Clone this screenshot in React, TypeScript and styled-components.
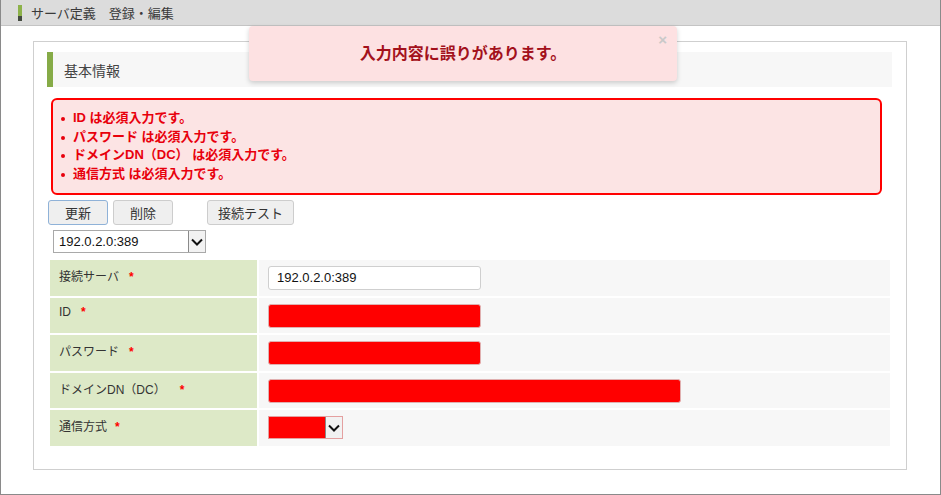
import React from "react";
import styled, { createGlobalStyle } from "styled-components";

const Global = createGlobalStyle`
  html, body { margin: 0; padding: 0; background: #fff; }
  body { font-family: "Liberation Sans", "Noto Sans CJK JP", sans-serif; color: #333; }
  * { box-sizing: border-box; }
`;

const Frame = styled.div`
  position: relative;
  width: 941px;
  height: 495px;
  border: 1px solid #8a8a8a;
  border-top: none;
  overflow: hidden;
`;

const Header = styled.div`
  height: 26px;
  background: #dcdcdc;
  border-bottom: 1px solid #c4c4c4;
  display: flex;
  align-items: center;
  padding-left: 17px;
  gap: 9px;
  font-size: 13px;
  color: #3a3a3a;
`;

const HeaderMark = styled.span`
  display: flex;
  flex-direction: column;
  width: 4px;
  height: 16px;
  margin-top: 1px;
`;

const MarkTop = styled.span`
  flex: 11;
  background: #8db24a;
`;
const MarkBottom = styled.span`
  flex: 5;
  background: #444b40;
`;

const Panel = styled.div`
  margin: 15px 33px 0 32px;
  height: 429px;
  border: 1px solid #cfcfcf;
  padding: 10px 14px 0 13px;
`;

const SectionTitle = styled.div`
  height: 35px;
  background: #f7f7f7;
  border-left: 6px solid #86ab47;
  display: flex;
  align-items: center;
  padding-left: 11px;
  font-size: 14px;
  color: #444;
`;

const ErrorBox = styled.ul`
  margin: 11px 0 0 4px;
  width: 831px;
  height: 97px;
  border: 2px solid #f00;
  border-radius: 6px;
  background: #fce4e4;
  padding: 9px 0 0 8px;
  list-style: none;
`;

const ErrorItem = styled.li`
  position: relative;
  font-size: 13px;
  line-height: 18.5px;
  font-weight: bold;
  color: #e8000c;
  padding-left: 12px;
  &::before {
    content: "";
    position: absolute;
    left: 0;
    top: 8px;
    width: 4px;
    height: 4px;
    border-radius: 50%;
    background: #e8000c;
  }
`;

const ButtonRow = styled.div`
  display: flex;
  margin: 5px 0 0 1px;
  gap: 5px;
`;

const Button = styled.button<{ $w: number; $focus?: boolean; $gapLeft?: number }>`
  width: ${(p) => p.$w}px;
  height: 25px;
  margin-left: ${(p) => p.$gapLeft ?? 0}px;
  background: #efefef;
  border: 1px solid ${(p) => (p.$focus ? "#8fb2d8" : "#cdcdcd")};
  border-radius: 3px;
  font-family: inherit;
  font-size: 13px;
  color: #333;
  padding: 0;
`;

const SelectBox = styled.div<{ $w: number; $red?: boolean }>`
  display: flex;
  width: ${(p) => p.$w}px;
  height: 23px;
  border: 1px solid ${(p) => (p.$red ? "#e4a0a0" : "#a9a9a9")};
  background: ${(p) => (p.$red ? "#f00" : "#fff")};
`;

const SelectText = styled.span`
  flex: 1;
  font-size: 13px;
  line-height: 21px;
  padding-left: 5px;
  color: #111;
`;

const SelectArrow = styled.span`
  width: 17px;
  display: flex;
  align-items: center;
  justify-content: center;
  background: #f2f2f2;
  border-left: 1px solid #8a8a8a;
`;

const ServerSelectWrap = styled.div`
  margin: 5px 0 0 6px;
`;

const Grid = styled.div`
  display: grid;
  grid-template-columns: 207px 631px;
  grid-auto-rows: 35.6px;
  gap: 2px;
  margin: 7px 0 0 3px;
`;

const LabelCell = styled.div`
  background: #dde9c7;
  font-size: 12px;
  color: #333;
  padding: 7px 0 0 9px;
`;

const Req = styled.span<{ $gap: number }>`
  color: #f00;
  margin-left: ${(p) => p.$gap}px;
  font-weight: bold;
`;

const ValueCell = styled.div`
  background: #f7f7f7;
  padding: 6px 0 0 9px;
`;

const Input = styled.div<{ $w: number; $red?: boolean }>`
  width: ${(p) => p.$w}px;
  height: 24px;
  border: 1px solid ${(p) => (p.$red ? "#e0b0b0" : "#cfcfcf")};
  border-radius: 3px;
  background: ${(p) => (p.$red ? "#f00" : "#fff")};
  font-size: 13px;
  line-height: 22px;
  padding-left: 8px;
  color: #111;
`;

const Toast = styled.div`
  position: absolute;
  left: 248px;
  top: 26px;
  width: 428px;
  height: 55px;
  background: #fde1e2;
  border-radius: 4px;
  box-shadow: 0 2px 5px rgba(0, 0, 0, 0.18);
  display: flex;
  align-items: center;
  justify-content: center;
  padding-bottom: 3px;
  font-size: 16px;
  font-weight: bold;
  color: #a3111c;
`;

const Close = styled.span`
  position: absolute;
  right: 10px;
  top: 5px;
  font-size: 15px;
  font-weight: bold;
  color: #c9c9c9;
`;

const Chevron = () => (
  <svg width="12" height="8" viewBox="0 0 12 8">
    <path d="M1 1.5 L6 6.5 L11 1.5" fill="none" stroke="#111" strokeWidth="2" />
  </svg>
);

const rows: { label: string; gap: number; kind: "text" | "red" | "redWide" | "redSelect"; value?: string }[] = [
  { label: "接続サーバ", gap: 10, kind: "text", value: "192.0.2.0:389" },
  { label: "ID", gap: 10, kind: "red" },
  { label: "パスワード", gap: 10, kind: "red" },
  { label: "ドメインDN（DC）", gap: 14, kind: "redWide" },
  { label: "通信方式", gap: 8, kind: "redSelect" },
];

export default function App() {
  return (
    <>
      <Global />
      <Frame>
        <Header>
          <HeaderMark>
            <MarkTop />
            <MarkBottom />
          </HeaderMark>
          <span>サーバ定義　登録・編集</span>
        </Header>
        <Panel>
          <SectionTitle>基本情報</SectionTitle>
          <ErrorBox>
            <ErrorItem>ID は必須入力です。</ErrorItem>
            <ErrorItem>パスワード は必須入力です。</ErrorItem>
            <ErrorItem>ドメインDN（DC） は必須入力です。</ErrorItem>
            <ErrorItem>通信方式 は必須入力です。</ErrorItem>
          </ErrorBox>
          <ButtonRow>
            <Button $w={60} $focus>更新</Button>
            <Button $w={60}>削除</Button>
            <Button $w={87} $gapLeft={29}>接続テスト</Button>
          </ButtonRow>
          <ServerSelectWrap>
            <SelectBox $w={153}>
              <SelectText>192.0.2.0:389</SelectText>
              <SelectArrow>
                <Chevron />
              </SelectArrow>
            </SelectBox>
          </ServerSelectWrap>
          <Grid>
            {rows.map((r) => (
              <React.Fragment key={r.label}>
                <LabelCell>
                  {r.label}
                  <Req $gap={r.gap}>*</Req>
                </LabelCell>
                <ValueCell>
                  {r.kind === "text" && <Input $w={213}>{r.value}</Input>}
                  {r.kind === "red" && <Input $w={213} $red />}
                  {r.kind === "redWide" && <Input $w={413} $red />}
                  {r.kind === "redSelect" && (
                    <SelectBox $w={75} $red>
                      <SelectText />
                      <SelectArrow>
                        <Chevron />
                      </SelectArrow>
                    </SelectBox>
                  )}
                </ValueCell>
              </React.Fragment>
            ))}
          </Grid>
        </Panel>
        <Toast>
          入力内容に誤りがあります。
          <Close>×</Close>
        </Toast>
      </Frame>
    </>
  );
}
